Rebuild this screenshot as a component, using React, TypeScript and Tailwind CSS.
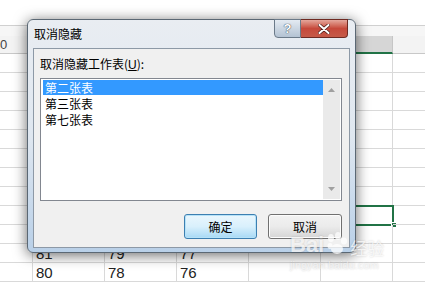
import React from 'react'

const CJK = { fontFamily: '"Noto Sans CJK SC", "Microsoft YaHei", sans-serif' }
const NUM = { fontFamily: '"Liberation Sans", Arial, sans-serif' }

const COLS = [33, 72, 72, 72, 72, 72, 72]

/** 数据行内容：行号 -> 单元格文本 */
const cellText: Record<number, string[]> = {
  10: ['', '81', '79', '77'],
  11: ['', '80', '78', '76'],
}

function Sheet() {
  return (
    <div className="w-[425px] h-[282px] bg-white overflow-hidden" style={NUM}>
      {/* 编辑栏区域 */}
      <div className="h-[26px] border-b border-[#d0d0d0] bg-white" />
      <div className="h-[10px] bg-[#f6f6f6]" />
      {/* 列标题 */}
      <div className="flex h-[18px] bg-[#f3f3f3]">
        {COLS.map((w, i) => (
          <div
            key={i}
            style={{ width: w }}
            className={
              i === 5
                ? 'shrink-0 h-full bg-[#d6d6d6] border-b-2 border-[#217346] border-r border-r-[#c6c6c6]'
                : 'shrink-0 h-full border-r border-[#dcdcdc] border-b border-b-[#c8c8c8] text-[13px] text-[#444] leading-[18px]'
            }
          >
            {i === 0 && <span>0</span>}
          </div>
        ))}
      </div>
      {/* 数据行 */}
      {Array.from({ length: 12 }).map((_, r) => (
        <div key={r} className="flex h-[19px]">
          {COLS.map((w, c) => (
            <div
              key={c}
              style={{ width: w }}
              className="relative shrink-0 h-full border-r border-b border-[#d9d9d9] pl-[3px] text-[15px] leading-[19px] text-[#222]"
            >
              {cellText[r]?.[c]}
              {r === 8 && c === 5 && (
                <>
                  <div className="absolute -left-px -top-px w-[74px] h-[21px] border-2 border-[#217346]" />
                  <div className="absolute -right-[5px] -bottom-[4px] w-[6px] h-[6px] bg-[#217346] border border-white" />
                </>
              )}
            </div>
          ))}
        </div>
      ))}
    </div>
  )
}

function Arrow({ up }: { up?: boolean }) {
  return (
    <svg width="7" height="4" viewBox="0 0 7 4">
      <path d={up ? 'M0 4 L3.5 0 L7 4 Z' : 'M0 0 L3.5 4 L7 0 Z'} fill="#a0a0a0" />
    </svg>
  )
}

function Dialog() {
  return (
    <div
      className="absolute left-[27px] top-[19px] w-[329px] h-[234px] rounded-[6px] border border-[#5b6874] bg-gradient-to-b from-[#e9edf2] via-[#dfe7f0] to-[#b9d0e8] shadow-[0_2px_14px_rgba(0,0,0,0.6)] flex flex-col"
      style={CJK}
    >
      {/* 标题栏 */}
      <div className="flex h-[28px] shrink-0">
        <div className="pl-[6px] pt-[4px] text-[12px] leading-[20px] text-black">取消隐藏</div>
        <div className="flex-1" />
        <div className="flex self-start mr-[7px] -mt-px">
          <div className="w-[27px] h-[19px] rounded-bl-[4px] border border-[#6b7a89] bg-gradient-to-b from-[#e4ebf2] via-[#cbd6e2] to-[#b4c3d3] flex items-center justify-center">
            <span
              className="text-[13px] font-bold text-white leading-none [text-shadow:0_0_1px_#34404c,0_0_1px_#34404c]"
              style={NUM}
            >
              ?
            </span>
          </div>
          <div className="w-[47px] h-[19px] rounded-br-[4px] border border-l-0 border-[#6e2a22] bg-gradient-to-b from-[#e4a79c] via-[#c6493b] to-[#c55a48] flex items-center justify-center">
            <svg width="12" height="10" viewBox="0 0 12 10">
              <path d="M1.5 1 L10.5 9 M10.5 1 L1.5 9" stroke="#4a1a14" strokeWidth="3.4" strokeLinecap="round" />
              <path d="M1.5 1 L10.5 9 M10.5 1 L1.5 9" stroke="#ffffff" strokeWidth="2" strokeLinecap="round" />
            </svg>
          </div>
        </div>
      </div>
      {/* 内容面板 */}
      <div className="mx-[5px] h-[200px] border border-[#8d99a6] bg-[#f0f0f0] pt-[7px] pl-[6px] pr-[7px] flex flex-col">
        <div className="text-[12px] leading-[16px] text-black">
          取消隐藏工作表(<span className="underline" style={NUM}>U</span>):
        </div>
        <div className="mt-[5px] h-[123px] border border-[#828790] bg-white flex p-px">
          <div className="flex-1 text-[12px] text-black">
            <div className="h-[15px] leading-[15px] bg-[#3399ff] text-white pl-[2px] ml-px">第二张表</div>
            <div className="h-[15px] leading-[15px] pl-[3px] mt-px">第三张表</div>
            <div className="h-[15px] leading-[15px] pl-[3px] mt-px">第七张表</div>
          </div>
          <div className="w-[17px] bg-[#eaeaea] flex flex-col items-center justify-between py-[8px]">
            <Arrow up />
            <Arrow />
          </div>
        </div>
        <div className="mt-[13px] flex justify-end gap-[11px]">
          <button className="w-[73px] h-[25px] rounded-[3px] border border-[#3c7fb1] bg-gradient-to-b from-[#eaf6fd] via-[#d9f0fc] to-[#a7d9f5] shadow-[inset_0_0_0_1px_#b6e2f8] text-[12px] text-black">
            确定
          </button>
          <button className="w-[74px] h-[25px] rounded-[3px] border border-[#707070] bg-gradient-to-b from-[#f2f2f2] via-[#ebebeb] to-[#d5d5d5] shadow-[inset_0_0_0_1px_#fcfcfc] text-[12px] text-black">
            取消
          </button>
        </div>
      </div>
    </div>
  )
}

function Watermark() {
  return (
    <div className="absolute left-[290px] top-[232px] text-white/75 [text-shadow:0_0_2px_rgba(0,0,0,0.2)]">
      <div className="flex items-end gap-[2px]">
        <span className="text-[22px] font-bold leading-none" style={NUM}>Bai</span>
        <svg width="22" height="24" viewBox="0 0 22 24" className="opacity-75">
          <ellipse cx="5" cy="6" rx="3" ry="4" fill="white" />
          <ellipse cx="12" cy="4" rx="3" ry="4" fill="white" />
          <ellipse cx="18" cy="9" rx="3" ry="3.5" fill="white" />
          <ellipse cx="4" cy="14" rx="2.5" ry="3" fill="white" />
          <ellipse cx="11" cy="17" rx="6" ry="5" fill="white" />
        </svg>
        <span className="text-[17px] leading-none" style={CJK}>经验</span>
      </div>
      <div className="text-[11px] leading-none mt-[4px] text-white/60" style={NUM}>jingyan.baidu.com</div>
    </div>
  )
}

export default function App() {
  return (
    <div className="relative w-[425px] h-[282px] overflow-hidden">
      <Sheet />
      <Dialog />
      <Watermark />
    </div>
  )
}
